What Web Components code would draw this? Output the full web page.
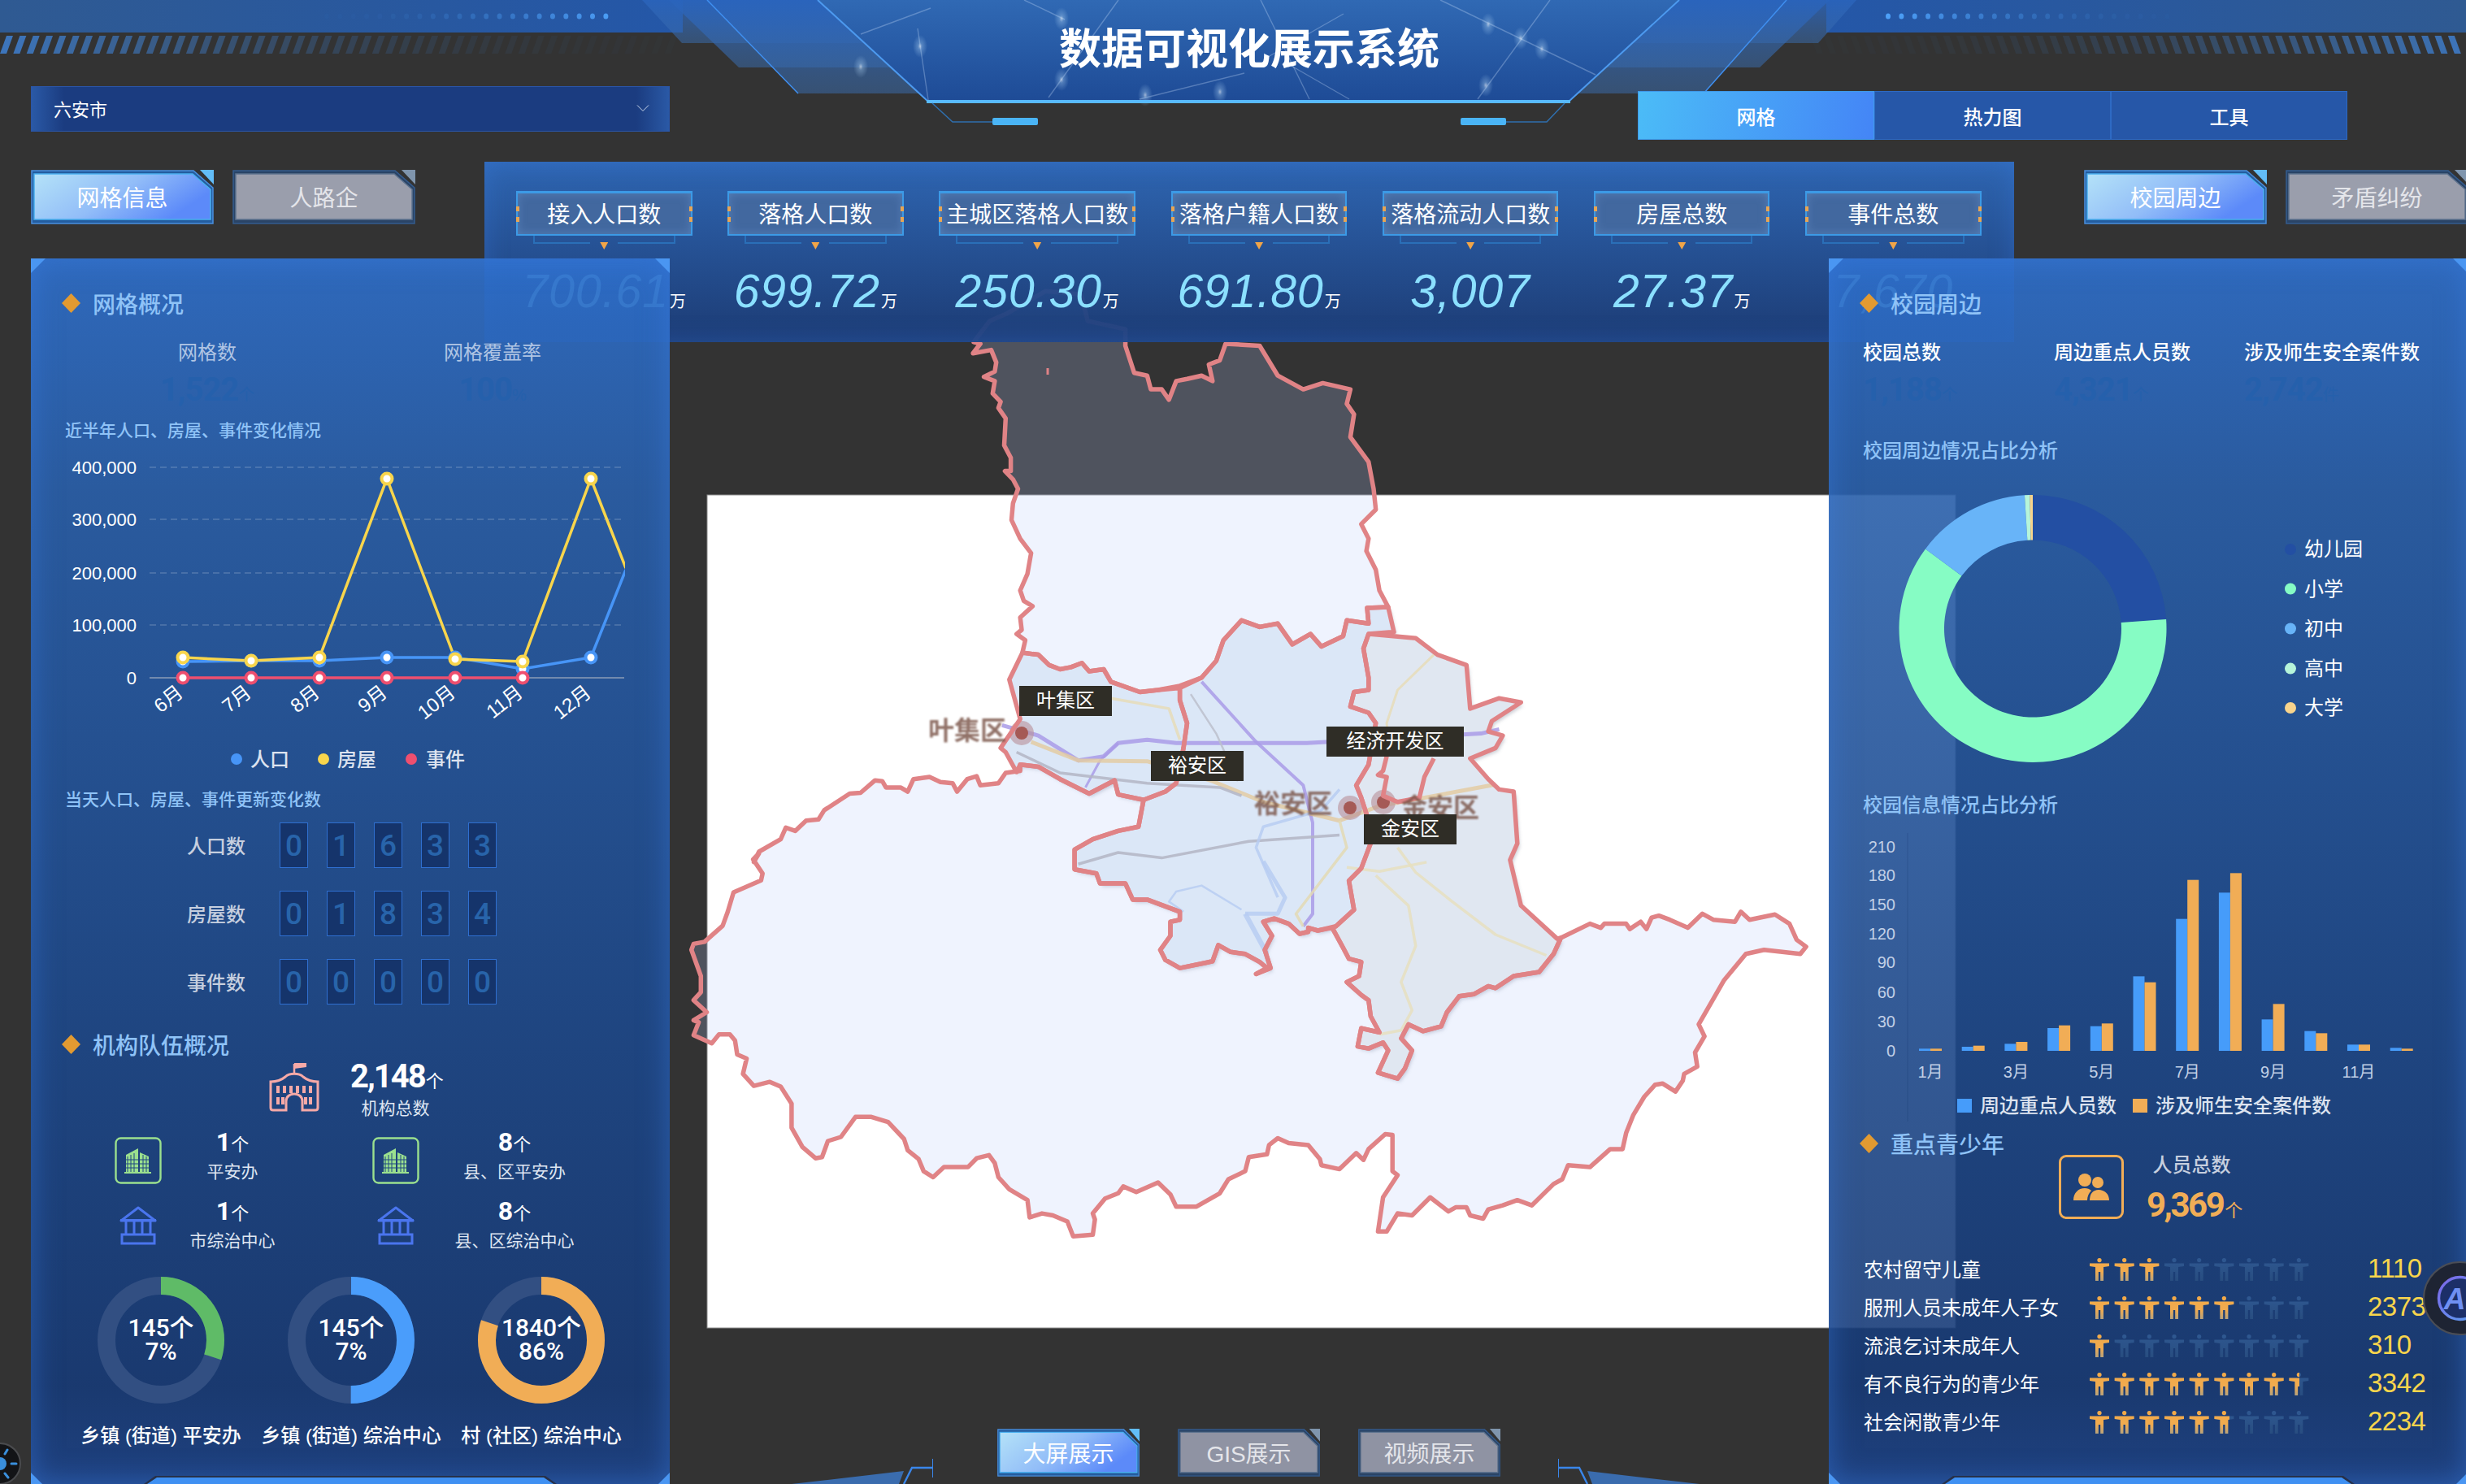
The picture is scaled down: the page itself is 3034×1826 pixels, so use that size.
<!DOCTYPE html>
<html lang="zh">
<head>
<meta charset="utf-8">
<title>数据可视化展示系统</title>
<style>
html, body { margin: 0; background: #333; }
body { font-family: "Liberation Sans", "Noto Sans CJK SC", sans-serif; color: #fff; }
</style>
</head>
<body>
<dash-screen>
    <city-map></city-map>
    <top-banner></top-banner>
    <tab-group class="left">
        <cut-tab active>网格信息</cut-tab>
        <cut-tab>人路企</cut-tab>
    </tab-group>
    <tab-group class="right">
        <cut-tab active>校园周边</cut-tab>
        <cut-tab>矛盾纠纷</cut-tab>
    </tab-group>
    <stat-bar>
        <stat-item label="接入人口数" value="700.61" unit="万"></stat-item>
        <stat-item label="落格人口数" value="699.72" unit="万"></stat-item>
        <stat-item label="主城区落格人口数" value="250.30" unit="万"></stat-item>
        <stat-item label="落格户籍人口数" value="691.80" unit="万"></stat-item>
        <stat-item label="落格流动人口数" value="3,007"></stat-item>
        <stat-item label="房屋总数" value="27.37" unit="万"></stat-item>
        <stat-item label="事件总数" value="7,670"></stat-item>
    </stat-bar>

    <dash-panel class="left">
        <sec-title>网格概况</sec-title>
        <metric-row columns="358px 344px" center pad="38">
            <metric-cell label="网格数" value="1,522" unit="个" dim></metric-cell>
            <metric-cell label="网格覆盖率" value="100" unit="%" dim></metric-cell>
        </metric-row>
        <mini-title style="margin-top:18px">近半年人口、房屋、事件变化情况</mini-title>
        <line-chart></line-chart>
        <mini-title style="margin-top:19px">当天人口、房屋、事件更新变化数</mini-title>
        <digit-row label="人口数" digits="01633" style="margin-top:13px"></digit-row>
        <digit-row label="房屋数" digits="01834" style="margin-top:28px"></digit-row>
        <digit-row label="事件数" digits="00000" style="margin-top:28px"></digit-row>
        <sec-title style="margin-top:29px">机构队伍概况</sec-title>
        <org-summary></org-summary>
        <org-grid>
            <org-item icon="tower" value="1" label="平安办" style="--tw:172px"></org-item>
            <org-item icon="tower" value="8" label="县、区平安办" style="--tw:232px"></org-item>
            <org-item icon="bank" value="1" label="市综治中心" style="--tw:172px"></org-item>
            <org-item icon="bank" value="8" label="县、区综治中心" style="--tw:232px"></org-item>
        </org-grid>
        <ring-row>
            <ring-stat color="#5fbb67" pct="30" top="145个" bottom="7%" label="乡镇 (街道) 平安办"></ring-stat>
            <ring-stat color="#4a9dfb" pct="50" top="145个" bottom="7%" label="乡镇 (街道) 综治中心"></ring-stat>
            <ring-stat color="#f1ad56" pct="80" top="1840个" bottom="86%" label="村 (社区) 综治中心"></ring-stat>
        </ring-row>
    </dash-panel>

    <dash-panel class="right">
        <sec-title>校园周边</sec-title>
        <metric-row columns="235px 234px 234px" pad="42">
            <metric-cell label="校园总数" value="1,188" unit="个"></metric-cell>
            <metric-cell label="周边重点人员数" value="4,321" unit="个"></metric-cell>
            <metric-cell label="涉及师生安全案件数" value="2,742" unit="件"></metric-cell>
        </metric-row>
        <mini-title big style="margin-top:43px">校园周边情况占比分析</mini-title>
        <pie-chart></pie-chart>
        <mini-title big style="margin-top:26px">校园信息情况占比分析</mini-title>
        <bar-chart></bar-chart>
        <sec-title style="margin-top:7px">重点青少年</sec-title>
        <youth-summary></youth-summary>
        <youth-row label="农村留守儿童" reach="92" value="1110" style="margin-top:37px"></youth-row>
        <youth-row label="服刑人员未成年人子女" reach="178" value="2373"></youth-row>
        <youth-row label="流浪乞讨未成年人" reach="30" value="310"></youth-row>
        <youth-row label="有不良行为的青少年" reach="258" value="3342"></youth-row>
        <youth-row label="社会闲散青少年" reach="172" value="2234"></youth-row>
    </dash-panel>

    <bottom-nav>
        <cut-tab small active>大屏展示</cut-tab>
        <cut-tab small>GIS展示</cut-tab>
        <cut-tab small>视频展示</cut-tab>
    </bottom-nav>
    <float-ball></float-ball>
    <sun-ball></sun-ball>
</dash-screen>

<script>
(function () {
    const SANS = '"Liberation Sans", "Noto Sans CJK SC", sans-serif';
    const DIN = 'Roboto, "Noto Sans CJK SC", sans-serif';

    // every element here is just a shadow root filled once from its attributes
    function define(name, css, render) {
        class Item extends HTMLElement {
            constructor() {
                super();
                this.attachShadow({ mode: "open" });
            }
            connectedCallback() {
                this.shadowRoot.innerHTML = `<style>${css}</style>${render(this)}`;
            }
        }
        customElements.define(name, Item);
    }

    /* Page */
    define("dash-screen", `
        :host { display: grid; position: relative; overflow: hidden; width: 3034px; height: 1826px; background: #333;
            grid-template-columns: 38px 558px 228px 1426px 228px 558px;
            grid-template-rows: 199px 119px 103px 1405px; }
        ::slotted(*) { position: relative; z-index: 1; }
        ::slotted(city-map) { position: absolute; z-index: 0; left: 0; top: 0; }
        ::slotted(top-banner) { grid-column: 1 / -1; grid-row: 1; }
        ::slotted(tab-group.left) { grid-column: 2 / 3; grid-row: 2; margin-top: 10px; }
        ::slotted(tab-group.right) { grid-column: 6 / 7; grid-row: 2; margin: 10px 0 0 86px; }
        ::slotted(stat-bar) { grid-column: 3 / 6; grid-row: 2 / 4; z-index: 2; }
        ::slotted(dash-panel.left) { grid-column: 2 / 4; grid-row: 3 / 5; z-index: 3; }
        ::slotted(dash-panel.right) { grid-column: 5 / 7; grid-row: 3 / 5; z-index: 3; }
        ::slotted(bottom-nav) { grid-column: 4 / 5; grid-row: 4; align-self: end; margin-left: 150px; z-index: 2; }
        ::slotted(float-ball), ::slotted(sun-ball) { position: absolute; z-index: 5; }
    `, () => `<slot></slot>`);

    /* Header */
    const starNet = [
        [1059, 82], [1132, 57], [1306, 23], [1306, 98], [1409, 117], [1501, 113],
        [1831, 30], [1871, 47], [1897, 60], [1828, 105]
    ];
    const netLines = [
        [1260, 0, 1310, 24], [1376, 0, 1290, 120], [1145, 10, 1059, 42], [1129, 35, 1142, 123],
        [1551, 0, 1611, 122], [1587, 80, 1660, 122], [1772, 0, 1963, 92], [1907, 0, 1818, 122],
        [1531, 90, 1402, 122], [1653, 17, 1560, 70]
    ];
    function stripes(from, to, lean, fadeTo) {
        let out = "";
        const n = Math.round((to - from) / 16.35);
        for (let i = 0; i < n; i++) {
            const x = from + i * 16.35;
            const t = fadeTo === "right" ? 1 - i / n : i / n;
            const o = (0.85 * t * t + 0.02).toFixed(2);
            out += `<polygon points="${x + lean},44 ${x + lean + 8},44 ${x + 8},66 ${x},66" fill="#3f80d0" opacity="${o}"/>`;
        }
        return out;
    }
    function dots(from, count, fadeTo) {
        let out = "";
        for (let i = 0; i < count; i++) {
            const t = fadeTo === "right" ? 1 - i / count : i / count;
            out += `<ellipse cx="${from + i * 16.35}" cy="20" rx="3" ry="3.6" fill="#4da0f8" opacity="${(t * t + 0.03).toFixed(2)}"/>`;
        }
        return out;
    }
    define("top-banner", `
        :host { display: grid; width: 3034px; height: 199px; }
        svg { grid-area: 1 / 1; display: block; }
        .bar { grid-area: 1 / 1; display: grid; grid-template-columns: 786px 1fr 873px; grid-template-rows: 106px 66px; padding: 0 146px 0 38px; }
        h1 { grid-column: 1 / -1; margin: 0; padding: 31px 0 0 148px; height: 75px; font: 700 52px/60px ${SANS}; text-align: center; color: #fff; letter-spacing: 0; }
        .select { grid-column: 1; display: flex; align-items: center; justify-content: space-between; box-sizing: border-box; height: 56px; padding: 0 24px 2px 27px;
            font-size: 22px; color: #fff; border: 1px solid #2b55a6;
            background: linear-gradient(90deg, #2a59a6, #1b3c80 40px, #1b3c80 calc(100% - 40px), #2a59a6); }
        .tools { grid-column: 3; display: flex; margin-top: 6px; height: 60px; }
        .tools span { flex: 1; display: flex; align-items: center; justify-content: center; box-sizing: border-box; font-size: 24px; font-weight: 500; color: #fff;
            background: #2657a8; border: 1px solid #2e6ac4; }
        .tools span.on { background: linear-gradient(100deg, #4bbcf7, #4485f6); border-color: #3f9aea; }
    `, () => `
        <svg width="3034" height="199" viewBox="0 0 3034 199">
            <defs>
                <linearGradient id="bandL" x1="0" x2="1" y1="0" y2="0"><stop offset="0" stop-color="#2f5a92"/><stop offset="1" stop-color="#2457a8"/></linearGradient>
                <linearGradient id="bandR" x1="1" x2="0" y1="0" y2="0"><stop offset="0" stop-color="#2f5a92"/><stop offset="1" stop-color="#2457a8"/></linearGradient>
                <linearGradient id="wing" x1="0" x2="0" y1="0" y2="1"><stop offset="0" stop-color="#2a64bc" stop-opacity=".85"/><stop offset="1" stop-color="#3a6aa8" stop-opacity=".55"/></linearGradient>
                <linearGradient id="main" x1="0" x2="0" y1="0" y2="1"><stop offset="0" stop-color="#3069b4"/><stop offset="1" stop-color="#1e4b96"/></linearGradient>
                <radialGradient id="glow"><stop offset="0" stop-color="#fff" stop-opacity=".6"/><stop offset=".3" stop-color="#bfe3ff" stop-opacity=".3"/><stop offset="1" stop-color="#bfe3ff" stop-opacity="0"/></radialGradient>
            </defs>
            <rect x="0" y="0" width="840" height="40" fill="url(#bandL)"/>
            <rect x="2247" y="0" width="787" height="40" fill="url(#bandR)"/>
            ${stripes(0, 835, 8, "right")}
            ${stripes(2235, 3034, -8, "left")}
            ${dots(402, 22, "left")}
            ${dots(2323, 22, "right")}
            <polygon points="790,0 839,53 1150,53 1150,0" fill="url(#wing)"/>
            <polygon points="823,0 909,83 1150,83 1150,0" fill="url(#wing)"/>
            <polygon points="870,0 982,115 1150,115 1150,0" fill="url(#wing)"/>
            <polygon points="2284,0 2237,53 1920,53 1920,0" fill="url(#wing)"/>
            <polygon points="2251,0 2165,83 1920,83 1920,0" fill="url(#wing)"/>
            <polygon points="2198,0 2096,115 1920,115 1920,0" fill="url(#wing)"/>
            <polyline points="870,0 982,115" fill="none" stroke="#3f8ff0" stroke-width="1.5"/>
            <polyline points="2198,0 2096,115" fill="none" stroke="#3f8ff0" stroke-width="1.5"/>
            <polygon points="1006,0 1142,125 1930,125 2066,0" fill="url(#main)"/>
            ${netLines.map(l => `<line x1="${l[0]}" y1="${l[1]}" x2="${l[2]}" y2="${l[3]}" stroke="#cfe6ff" stroke-opacity=".3" stroke-width="1.4"/>`).join("")}
            ${starNet.map(p => `<ellipse cx="${p[0]}" cy="${p[1]}" rx="9" ry="14" fill="url(#glow)"/>`).join("")}
            <polyline points="1006,0 1142,125" fill="none" stroke="#4d9aef" stroke-width="2"/>
            <polyline points="2066,0 1930,125" fill="none" stroke="#4d9aef" stroke-width="2"/>
            <rect x="1140" y="123" width="792" height="4" fill="#58baff"/>
            <polyline points="1147,127 1172,150 1221,150" fill="none" stroke="#2f6fae" stroke-width="1.5"/>
            <polyline points="1925,127 1903,150 1853,150" fill="none" stroke="#2f6fae" stroke-width="1.5"/>
            <rect x="1221" y="145" width="56" height="9" rx="2" fill="#4ab4f6"/>
            <rect x="1797" y="145" width="56" height="9" rx="2" fill="#4ab4f6"/>
        </svg>
        <div class="bar">
            <h1>数据可视化展示系统</h1>
            <div class="select">
                <span>六安市</span>
                <svg width="16" height="8" viewBox="0 0 16 8"><polyline points="1,0.5 8,7.5 15,0.5" fill="none" stroke="#c9d6ea" stroke-width="1"/></svg>
            </div>
            <div></div>
            <div class="tools"><span class="on">网格</span><span>热力图</span><span>工具</span></div>
        </div>
    `);

    /* Cut-corner tabs */
    define("tab-group", `:host { display: flex; gap: 23px; align-items: flex-start; }`, () => `<slot></slot>`);
    define("cut-tab", `
        :host { display: inline-grid; flex: none; width: 225px; height: 67px; font-size: 28px; color: #e4e5ea; }
        :host([active]) { color: #fff; }
        :host([small]) { width: 175px; height: 59px; }
        svg { grid-area: 1 / 1; display: block; width: 100%; height: 100%; }
        span { grid-area: 1 / 1; align-self: center; justify-self: center; margin-bottom: 2px; }
    `, el => {
        const on = el.hasAttribute("active");
        const fill = on ? "url(#g)" : (el.hasAttribute("small") ? "#8f93a3" : "#9a9eac");
        return `
        <svg viewBox="0 0 225 67" preserveAspectRatio="none">
            <defs><linearGradient id="g" x1="0" x2="1" y1="0" y2=".4"><stop offset="0" stop-color="#b4e2f8"/><stop offset=".55" stop-color="#92bdf8"/><stop offset="1" stop-color="#5c8af9"/></linearGradient></defs>
            <polygon points="1,1 200,1 224,22 224,66 1,66" fill="${on ? "#245d9f" : "#2a4466"}" stroke="${on ? "#4a90e0" : "#345c8f"}" stroke-width="1.5"/>
            <polygon points="4,5 199,5 221,24 221,61 4,61" fill="${fill}" stroke="${on ? "#4ab0f0" : "#5e738f"}" stroke-width="1.5"/>
            <polygon points="208,0 225,0 225,18" fill="${on ? "#62bdf8" : "#7f95ad"}"/>
        </svg>
        <span><slot></slot></span>`;
    });
    define("bottom-nav", `
        :host { display: flex; align-items: flex-end; }
        svg { display: block; flex: none; }
        .tabs { display: flex; gap: 47px; margin: 0 71px 9px 79px; }
    `, () => `
        <svg width="174" height="31" viewBox="0 0 174 31">
            <polygon points="0,31 138,15 132,31" fill="#3a6cae"/>
            <polyline points="138,31 148,11 174,11" fill="none" stroke="#3a86ea" stroke-width="2.4"/>
            <line x1="174" y1="0" x2="174" y2="23" stroke="#3a86ea" stroke-width="2"/>
        </svg>
        <div class="tabs"><slot></slot></div>
        <svg width="174" height="31" viewBox="0 0 174 31">
            <polygon points="174,31 36,15 42,31" fill="#3a6cae"/>
            <polyline points="36,31 26,11 0,11" fill="none" stroke="#3a86ea" stroke-width="2.4"/>
            <line x1="0" y1="0" x2="0" y2="23" stroke="#3a86ea" stroke-width="2"/>
        </svg>
    `);

    /* Stats */
    define("stat-bar", `
        :host { display: flex; gap: 43.6px; box-sizing: border-box; padding: 36px 0 0 39px;
            background: linear-gradient(180deg, rgba(46,104,184,.95), rgba(27,60,120,.95));
            box-shadow: inset 0 0 30px rgba(60,130,235,.35); }
    `, () => `<slot></slot>`);
    define("stat-item", `
        :host { display: block; flex: none; min-width: 216.5px; }
        .label { position: relative; display: flex; align-items: center; justify-content: center; box-sizing: border-box; height: 55px; padding: 0 7px 2px;
            font-size: 28px; color: #fff; white-space: nowrap; background: #42689f;
            border: 2px solid #3c9ae6; border-top-width: 3px; box-shadow: inset 0 0 12px rgba(120,170,230,.35); }
        .label i { position: absolute; width: 4px; height: 6px; background: #e8a654; }
        .br { display: flex; gap: 34px; height: 10px; margin: 0 21px; }
        .br b { flex: 1; box-sizing: border-box; border-bottom: 2px solid #2a6fb8; }
        .br b:first-child { border-left: 2px solid #2a6fb8; }
        .br b:last-child { border-right: 2px solid #2a6fb8; }
        .tri { width: 10px; height: 9px; margin: -2px auto 0; background: #f1a548; clip-path: polygon(0 0, 100% 0, 50% 100%); }
        .num { display: flex; justify-content: center; align-items: baseline; margin-top: 19px; white-space: nowrap; }
        .num span { font: italic 400 57px/64px ${SANS}; letter-spacing: 1px; color: #8be0ff; }
        .num em { font: normal 20px/24px ${SANS}; color: #fff; margin-left: 1px; }
    `, el => `
        <div class="label">${el.getAttribute("label")}
            <i style="left:-2px;top:16px"></i><i style="left:-2px;top:29px"></i>
            <i style="right:-2px;top:16px"></i><i style="right:-2px;top:29px"></i>
        </div>
        <div class="br"><b></b><b></b></div>
        <div class="tri"></div>
        <div class="num"><span>${el.getAttribute("value")}</span>${el.getAttribute("unit") ? `<em>${el.getAttribute("unit")}</em>` : ""}</div>
    `);

    /* Panels */
    define("dash-panel", `
        :host { display: block; box-sizing: border-box; position: relative; padding-top: 35px; height: 1508px;
            background: linear-gradient(180deg, rgba(46,110,201,.9) 1%, rgba(41,95,170,.9) 19%, rgba(29,72,138,.9) 62%, rgba(23,58,118,.9) 92%, rgba(28,66,135,.9) 100%);
            box-shadow: inset 0 0 36px rgba(60,130,235,.5); }
        .c { position: absolute; width: 18px; height: 18px; background: #4a96f2; }
        .tl { left: 0; top: 0; clip-path: polygon(0 0, 100% 0, 0 100%); }
        .tr { right: 0; top: 0; clip-path: polygon(0 0, 100% 0, 100% 100%); }
        .bl { left: 0; bottom: 0; width: 14px; height: 14px; clip-path: polygon(0 0, 100% 100%, 0 100%); }
        .br { right: 0; bottom: 0; width: 14px; height: 14px; clip-path: polygon(100% 0, 100% 100%, 0 100%); }
        .foot { position: absolute; left: 50%; bottom: 0; width: 508px; margin-left: -254px; height: 10px; background: #27314a; clip-path: polygon(14px 0, calc(100% - 14px) 0, 100% 100%, 0 100%); }
        .foot::after { content: ""; position: absolute; left: 4px; right: 4px; top: 2px; bottom: 0; background: #3f90f2; clip-path: polygon(12px 0, calc(100% - 12px) 0, 100% 100%, 0 100%); }
    `, () => `
        <i class="c tl"></i><i class="c tr"></i><i class="c bl"></i><i class="c br"></i><i class="foot"></i>
        <slot></slot>
    `);
    define("sec-title", `
        :host { display: flex; align-items: center; height: 40px; padding-left: 38px; font-size: 28px; font-weight: 500; color: #8fc3f7; }
        i { width: 23px; height: 24px; margin-right: 15px; background: #e29a31; clip-path: polygon(50% 0, 100% 50%, 50% 100%, 0 50%); filter: drop-shadow(0 0 3px rgba(240,170,70,.6)); }
    `, () => `<i></i><slot></slot>`);
    define("mini-title", `
        :host { display: block; height: 30px; line-height: 30px; padding-left: 42px; font-size: 21px; font-weight: 500; color: #8fc3f7; white-space: nowrap; }
        :host([big]) { font-size: 24px; }
    `, () => `<slot></slot>`);
    define("metric-row", `
        :host { display: grid; margin-top: 24px; }
    `, el => {
        el.style.gridTemplateColumns = el.getAttribute("columns");
        el.style.paddingLeft = el.getAttribute("pad") + "px";
        if (el.hasAttribute("center")) el.style.textAlign = "center";
        return `<slot></slot>`;
    });
    define("metric-cell", `
        :host { display: block; white-space: nowrap; font-size: 24px; font-weight: 500; color: #fff; }
        :host([dim]) { color: #b0c5e4; font-weight: 400; }
        .t { height: 34px; line-height: 34px; }
        .v { margin-top: 12px; height: 34px; line-height: 34px; color: #2560ac; }
        .v b { font: 700 40px/34px ${DIN}; letter-spacing: -1px; }
        .v i { font: normal 20px/24px ${SANS}; }
    `, el => `
        <div class="t">${el.getAttribute("label")}</div>
        <div class="v"><b>${el.getAttribute("value")}</b><i>${el.getAttribute("unit")}</i></div>
    `);

    /* Left panel charts */
    define("line-chart", `
        :host { display: block; margin-top: 5px; height: 400px; }
        svg { display: block; font-family: ${SANS}; }
    `, () => {
        const xs = [225, 309, 393, 476, 560, 643, 727];
        const blue = [814, 813, 813, 809, 809, 823, 809];
        const yellow = [809, 813, 809, 589, 811, 814, 589];
        const red = xs.slice(0, 6);
        const line = (ys, end) => xs.map((x, i) => `${x},${ys[i]}`).join(" ") + ` ${end}`;
        const mark = (x, y, c) => `<circle cx="${x}" cy="${y}" r="6.5" fill="#fff" stroke="${c}" stroke-width="4"/>`;
        const rows = [[575, "400,000"], [639, "300,000"], [705, "200,000"], [769, "100,000"]];
        const months = ["6月", "7月", "8月", "9月", "10月", "11月", "12月"];
        return `
        <svg width="786" height="400" viewBox="38 550 786 400">
            <defs><clipPath id="plot"><rect x="184" y="560" width="585" height="290"/></clipPath></defs>
            ${rows.map(r => `<line x1="184" x2="768" y1="${r[0]}" y2="${r[0]}" stroke="#fff" stroke-opacity=".2" stroke-width="1.5" stroke-dasharray="8 5"/>
                <text x="168" y="${r[0] + 8}" text-anchor="end" font-size="22" fill="#fff">${r[1]}</text>`).join("")}
            <line x1="184" x2="768" y1="834" y2="834" stroke="#b8bcc6" stroke-opacity=".7" stroke-width="1.5"/>
            <text x="168" y="842" text-anchor="end" font-size="22" fill="#fff">0</text>
            ${months.map((m, i) => `<text x="${xs[i] + 2}" y="855" text-anchor="end" font-size="24" fill="#fff" transform="rotate(-38 ${xs[i] + 2} 855)">${m}</text>`).join("")}
            <g clip-path="url(#plot)">
                <polyline points="${line(blue, "770,701")}" fill="none" stroke="#4795f7" stroke-width="3.5"/>
                <polyline points="${line(yellow, "770,699")}" fill="none" stroke="#f8d54c" stroke-width="3.5"/>
                <polyline points="${red.map(x => `${x},834`).join(" ")}" fill="none" stroke="#ee4f6f" stroke-width="3.5"/>
                ${xs.map((x, i) => mark(x, blue[i], "#4795f7")).join("")}
                ${xs.map((x, i) => mark(x, yellow[i], "#f8d54c")).join("")}
                ${red.map(x => mark(x, 834, "#ee4f6f")).join("")}
            </g>
            <circle cx="291" cy="934" r="7" fill="#4795f7"/><text x="308" y="943" font-size="24" font-weight="500" fill="#dde3ef">人口</text>
            <circle cx="398" cy="934" r="7" fill="#f8d54c"/><text x="415" y="943" font-size="24" font-weight="500" fill="#dde3ef">房屋</text>
            <circle cx="506" cy="934" r="7" fill="#ee4f6f"/><text x="524" y="943" font-size="24" font-weight="500" fill="#dde3ef">事件</text>
        </svg>`;
    });
    define("digit-row", `
        :host { display: flex; align-items: center; height: 56px; }
        label { width: 264px; text-align: right; font-size: 24px; font-weight: 500; color: #c6cfdf; margin-bottom: 2px; }
        .d { display: flex; gap: 23px; margin-left: 42px; }
        .d span { box-sizing: border-box; width: 35px; height: 56px; display: flex; align-items: center; justify-content: center;
            background: #15346b; border: 1px solid #2f6fd0; color: #2864aa; font: 500 37px/1 ${DIN}; }
    `, el => `
        <label>${el.getAttribute("label")}</label>
        <div class="d">${[...el.getAttribute("digits")].map(n => `<span>${n}</span>`).join("")}</div>
    `);
    define("org-summary", `
        :host { display: flex; margin-top: 2px; padding-left: 293px; height: 72px; }
        svg { flex: none; display: block; }
        .t { width: 111px; margin-left: 38px; text-align: center; white-space: nowrap; }
        .v { height: 36px; line-height: 36px; }
        .v b { font: 700 40px/36px ${DIN}; letter-spacing: -2px; }
        .v i { font: normal 22px/24px ${SANS}; margin-left: 1px; }
        .l { margin-top: 6px; height: 30px; line-height: 30px; font-size: 21px; color: #dfe6f2; }
    `, () => `
        <svg width="62" height="61" viewBox="0 0 62 61" fill="none" stroke="#f6a9a7" stroke-width="3">
            <path d="M31 14V2" stroke-width="2.5"/>
            <path d="M31 1H46V6L31 8Z" fill="#f6a9a7" stroke="none"/>
            <path d="M2 24C8 24 14 23 20 18C25 13 37 13 42 18C48 23 54 24 60 24V56C60 58 59 59 57 59H41V48C41 42 36 39 31 39C26 39 21 42 21 48V59H5C3 59 2 58 2 56Z"/>
            <g stroke="none" fill="#f6a9a7">
                <rect x="9" y="29" width="4" height="9"/><rect x="17" y="29" width="4" height="9"/><rect x="25" y="29" width="4" height="9"/><rect x="33" y="29" width="4" height="9"/><rect x="41" y="29" width="4" height="9"/><rect x="49" y="29" width="4" height="9"/>
                <rect x="9" y="43" width="4" height="9"/><rect x="15" y="43" width="4" height="9"/><rect x="43" y="43" width="4" height="9"/><rect x="49" y="43" width="4" height="9"/>
            </g>
        </svg>
        <div class="t">
            <div class="v"><b>2,148</b><i>个</i></div>
            <div class="l">机构总数</div>
        </div>
    `);
    define("org-grid", `
        :host { display: grid; grid-template-columns: 317px 1fr; row-gap: 17px; margin-top: 10px; padding-left: 102px; }
    `, () => `<slot></slot>`);
    const orgIcons = {
        tower: `<svg width="58" height="58" viewBox="0 0 58 58">
            <rect x="1.5" y="1.5" width="55" height="55" rx="6" fill="none" stroke="#9be08e" stroke-width="2.4"/>
            <path d="M14 43V22L29 14V43ZM31 43V19L42 24V43ZM12 43H45V45H12Z" fill="#9be08e"/>
            <g stroke="#1f4681" stroke-width="1"><path d="M16 24V43M20 22V43M24 20V43M35 22V43M39 24V43M14 28H42M14 33H42M14 38H42"/></g>
        </svg>`,
        bank: `<svg width="46" height="48" viewBox="0 0 46 48" fill="none" stroke="#4a75ee" stroke-width="3">
            <path d="M2 18L23 2L44 18Z" stroke-linejoin="round"/>
            <rect x="1" y="16" width="44" height="3" fill="#4a75ee" stroke="none"/>
            <path d="M8 19V35M18 19V35M28 19V35M38 19V35" stroke-width="3"/>
            <rect x="3" y="35" width="40" height="11"/>
        </svg>`
    };
    define("org-item", `
        :host { display: flex; height: 68px; }
        .i { flex: none; width: 60px; display: flex; justify-content: center; align-items: flex-start; padding-top: 10px; }
        .t { flex: none; width: var(--tw); text-align: center; white-space: nowrap; }
        .v { height: 32px; line-height: 32px; }
        .v b { font: 700 32px/32px ${DIN}; }
        .v i { font: normal 22px/24px ${SANS}; }
        .l { margin-top: 6px; height: 30px; line-height: 30px; font-size: 21px; color: #dfe6f2; }
    `, el => `
        <div class="i">${orgIcons[el.getAttribute("icon")]}</div>
        <div class="t">
            <div class="v"><b>${el.getAttribute("value")}</b><i>个</i></div>
            <div class="l">${el.getAttribute("label")}</div>
        </div>
    `);
    define("ring-row", `
        :host { display: grid; grid-template-columns: repeat(3, 234px); margin-top: 29px; padding-left: 43px; }
    `, () => `<slot></slot>`);
    define("ring-stat", `
        :host { display: flex; flex-direction: column; align-items: center; }
        .r { display: grid; width: 156px; height: 156px; }
        svg { grid-area: 1 / 1; display: block; }
        .t { grid-area: 1 / 1; align-self: center; text-align: center; font: 500 30px/29px ${DIN}; margin-top: -3px; }
        .l { margin-top: 25px; height: 30px; line-height: 30px; font-size: 24px; font-weight: 500; white-space: nowrap; }
    `, el => {
        const c = 2 * Math.PI * 67;
        const pct = +el.getAttribute("pct") / 100;
        return `
        <div class="r">
            <svg width="156" height="156" viewBox="0 0 156 156">
                <circle cx="78" cy="78" r="67" fill="none" stroke="#324f82" stroke-width="22"/>
                <circle cx="78" cy="78" r="67" fill="none" stroke="${el.getAttribute("color")}" stroke-width="22"
                    stroke-dasharray="${c * pct} ${c}" transform="rotate(-90 78 78)"/>
            </svg>
            <div class="t">${el.getAttribute("top")}<br>${el.getAttribute("bottom")}</div>
        </div>
        <div class="l">${el.getAttribute("label")}</div>`;
    });

    /* Right panel charts */
    function arc(cx, cy, r0, r1, a0, a1) {
        const p = (r, a) => {
            const t = (a - 90) * Math.PI / 180;
            return `${(cx + r * Math.cos(t)).toFixed(2)} ${(cy + r * Math.sin(t)).toFixed(2)}`;
        };
        const big = a1 - a0 > 180 ? 1 : 0;
        return `M${p(r1, a0)}A${r1} ${r1} 0 ${big} 1 ${p(r1, a1)}L${p(r0, a1)}A${r0} ${r0} 0 ${big} 0 ${p(r0, a0)}Z`;
    }
    define("pie-chart", `
        :host { display: block; margin-top: 30px; height: 350px; }
        svg { display: block; font-family: ${SANS}; }
    `, () => {
        const parts = [[0, 86, "#234fa3"], [86, 306.6, "#86fcc4"], [306.6, 356.5, "#68b4f8"], [356.5, 358.7, "#b6f5da"], [358.7, 360, "#f8d48c"]];
        const legend = [["幼儿园", "#234fa3", 676], ["小学", "#86fcc4", 724.5], ["初中", "#68b4f8", 773.5], ["高中", "#b6f5da", 822.6], ["大学", "#f8d48c", 871]];
        return `
        <svg width="786" height="350" viewBox="2250 600 786 350">
            ${parts.map(p => `<path d="${arc(2501, 773.5, 109, 164.5, p[0], p[1])}" fill="${p[2]}"/>`).join("")}
            ${legend.map(l => `<circle cx="2818" cy="${l[2]}" r="7" fill="${l[1]}"/><text x="2835" y="${l[2] + 8}" font-size="24" fill="#fff">${l[0]}</text>`).join("")}
        </svg>`;
    });
    define("bar-chart", `
        :host { display: block; margin-top: 14px; height: 360px; }
        svg { display: block; font-family: ${SANS}; }
    `, () => {
        const tops = [[871, 871], [864, 860], [853, 846], [795, 785], [788, 778], [604, 626], [392, 248], [295, 223], [763, 706], [806, 814], [856, 856], [868, 871]];
        const base = 1293;
        const ticks = [[210, 1042], [180, 1077], [150, 1113], [120, 1149], [90, 1184], [60, 1221], [30, 1257], [0, 1293]];
        const labels = [[0, "1月"], [2, "3月"], [4, "5月"], [6, "7月"], [8, "9月"], [10, "11月"]];
        const bars = tops.map((t, i) => {
            const cx = 2375 + i * 52.7;
            const y0 = 1000 + t[0] / 3, y1 = 1000 + t[1] / 3;
            return `<rect x="${cx - 14}" y="${y0}" width="14" height="${base - y0}" fill="#469cfa"/>
                <rect x="${cx}" y="${y1}" width="14" height="${base - y1}" fill="#f1ad56"/>`;
        }).join("");
        return `
        <svg width="786" height="360" viewBox="2250 1020 786 360">
            <line x1="2347" x2="2347" y1="1025" y2="1380" stroke="#10306a" stroke-opacity=".25"/>
            ${ticks.map(t => `<text x="2332" y="${t[1] + 7}" text-anchor="end" font-size="20" fill="#c2d0e6">${t[0]}</text>`).join("")}
            ${bars}
            ${labels.map(l => `<text x="${2375 + l[0] * 52.7}" y="1326" text-anchor="middle" font-size="20" fill="#c2d0e6">${l[1]}</text>`).join("")}
            <rect x="2408" y="1352" width="18" height="17" fill="#469cfa"/>
            <text x="2436" y="1369" font-size="24" font-weight="500" fill="#dde3ef">周边重点人员数</text>
            <rect x="2624" y="1352" width="18" height="17" fill="#f1ad56"/>
            <text x="2652" y="1369" font-size="24" font-weight="500" fill="#dde3ef">涉及师生安全案件数</text>
        </svg>`;
    });
    define("youth-summary", `
        :host { display: flex; margin-top: -6px; padding-left: 283px; height: 79px; }
        .i { flex: none; box-sizing: border-box; width: 80px; height: 79px; border: 3px solid #f1ad56; border-radius: 9px; display: flex; align-items: center; justify-content: center; }
        .t { flex: none; width: 111px; margin-left: 28px; text-align: center; white-space: nowrap; }
        .l { height: 26px; line-height: 26px; font-size: 24px; font-weight: 500; color: #c6cfdf; }
        .v { margin-top: 18px; height: 36px; line-height: 36px; color: #f1ad56; }
        .v b { font: 700 42px/36px ${DIN}; letter-spacing: -2.5px; }
        .v i { font: normal 22px/24px ${SANS}; margin-left: 2px; }
    `, () => `
        <div class="i">
            <svg width="44" height="34" viewBox="0 0 44 34" fill="#f1ad56">
                <circle cx="14" cy="8" r="8"/><path d="M0 33C0 24 6 18 14 18C17 18 20 19 22 21C19 24 17 28 17 33Z"/>
                <circle cx="30" cy="11" r="7"/><path d="M20 33C20 25 24 20 31 20C38 20 44 25 44 33Z"/>
            </svg>
        </div>
        <div class="t">
            <div class="l">人员总数</div>
            <div class="v"><b>9,369</b><i>个</i></div>
        </div>
    `);
    const PERSON = "M12 0a2.6 2.6 0 1 1 0 5.2a2.6 2.6 0 1 1 0-5.2ZM0 6.6H24V10L17 11V28H13.2V17H10.8V28H7V11L0 10Z";
    define("youth-row", `
        :host { display: grid; grid-template-columns: 278px 343px 1fr; align-items: center; height: 47px; padding-left: 43px; white-space: nowrap; }
        .l { font-size: 24px; color: #fff; }
        svg { display: block; margin-top: 2px; }
        .v { font: 400 33px/40px ${SANS}; letter-spacing: -.5px; color: #f8d54c; margin-left: -1px; }
    `, el => {
        const people = fill => Array.from({ length: 9 }, (_, i) => `<path d="${PERSON}" transform="translate(${i * 30.67} 0)" fill="${fill}"/>`).join("");
        return `
        <div class="l">${el.getAttribute("label")}</div>
        <svg width="276" height="28" viewBox="0 0 276 28">
            <defs>
                <linearGradient id="on" x1="0" x2="0" y1="0" y2="1"><stop offset="0" stop-color="#f3a946"/><stop offset=".6" stop-color="#f0ab50"/><stop offset="1" stop-color="#b7a27c"/></linearGradient>
                <linearGradient id="off" x1="0" x2="0" y1="0" y2="1"><stop offset="0" stop-color="#2f5891"/><stop offset="1" stop-color="#284d80"/></linearGradient>
                <clipPath id="reach"><rect width="${el.getAttribute("reach")}" height="28"/></clipPath>
            </defs>
            ${people("url(#off)")}
            <g clip-path="url(#reach)">${people("url(#on)")}</g>
        </svg>
        <div class="v">${el.getAttribute("value")}</div>`;
    });

    /* Floating widgets */
    define("float-ball", `
        :host { display: block; left: 2981px; top: 1552px; width: 91px; height: 91px; }
        svg { display: block; font-family: ${SANS}; }
    `, () => `
        <svg width="91" height="91" viewBox="0 0 91 91">
            <defs><linearGradient id="ring" x1="0" x2="1" y1="0" y2="1"><stop offset="0" stop-color="#7c66e8"/><stop offset="1" stop-color="#5aa0f0"/></linearGradient></defs>
            <circle cx="45.5" cy="45.5" r="44.5" fill="#1e2433" stroke="#4a4d55" stroke-width="2"/>
            <circle cx="45.5" cy="45.5" r="26" fill="#1c2f68" stroke="url(#ring)" stroke-width="3.5"/>
            <text x="39" y="59" text-anchor="middle" font-size="37" font-weight="700" font-style="italic" fill="#6f90f2">A</text>
        </svg>
    `);
    define("sun-ball", `
        :host { display: block; left: -26px; top: 1775px; width: 52px; height: 52px; }
        svg { display: block; }
    `, () => `
        <svg width="52" height="52" viewBox="0 0 52 52">
            <circle cx="26" cy="26" r="25" fill="#131417" stroke="#4a4b4e" stroke-width="2"/>
            <circle cx="26" cy="26" r="8" fill="#3a8fdc"/>
            <g stroke="#3a8fdc" stroke-width="3" stroke-linecap="round"><path d="M32 14L35 9M40 26H46M32 38L36 43M20 14L17 9"/></g>
        </svg>
    `);

    /* Map */
    const z9 = s => s.trim().split(/\s+/).map(p => { const [x, y] = p.split(",").map(Number); return [840 + x / 1.12, 400 + y / 1.96]; });
    const z10 = s => s.trim().split(/\s+/).map(p => { const [x, y] = p.split(",").map(Number); return [840 + x / 1.12, 1050 + y / 2.02]; });
    const pts = list => list.map(p => p[0].toFixed(1) + "," + p[1].toFixed(1)).join(" ");

    const north = z9("400,68 410,45 401,41 423,-10 448,-29 500,-82 549,-74 558,-10 610,10 610,50 622,115 640,122 645,155 660,155 670,180 680,135 695,130 715,122 730,135 725,95 740,85 748,45 795,50 820,122 855,155 882,140 920,155 915,190 925,215 920,270 945,330 952,395 955,445 935,480 945,515 942,545 955,590 960,640 972,680 943,682 945,720 915,712 910,750 880,775 865,745 840,770 820,720 795,728 770,712 745,760 735,810 715,850 685,870 655,880 630,885 590,860 580,830 560,835 550,815 535,825 520,830 505,820 490,795 468,790 472,760 460,745 467,735 465,705 482,678 470,665 465,640 475,600 480,550 465,515 453,470 455,430 462,395 455,372 444,352 452,352 452,320 443,290 445,225 435,200 438,185 427,165 430,135 415,125 430,112 432,90 425,60");
    const south = [
        ...z9("98,1295 105,1270 135,1240 142,1212 155,1220 170,1195 187,1192 195,1170 230,1130 245,1128 265,1098 275,1100 280,1115 300,1115 310,1125 318,1095 340,1090 355,1102 372,1105 378,1125 392,1095 405,1088 410,1110 435,1105 445,1080 465,1075 465,1060 490,1065 520,1095 560,1130 595,1098 600,1132 635,1145 628,1210 600,1220 565,1240 540,1265"),
        ...z10("540,40 570,50 575,75 610,75 620,115 640,115 685,145 685,165 672,170 672,205 658,240 665,265 685,285 720,272 730,268 738,228 755,245 775,250 795,270 805,285 790,300 810,285 802,240 812,205 800,170 815,162 835,175 850,200 862,195 862,185 875,192 895,185 910,235 918,262 935,270 932,305 915,320 935,352 945,365 948,405 960,445 935,435 930,480 945,485 965,470 972,490 958,545 985,560 995,535 1005,490 990,460 1000,425 1020,442 1045,430 1053,395 1070,355 1090,350 1110,330 1120,335 1145,305 1180,295 1200,250 1210,210 1250,175 1265,185 1270,175 1300,175 1305,188 1320,170 1328,188 1335,160 1345,155 1360,165 1385,185 1405,150 1420,165 1450,170 1458,145 1470,165 1505,152 1525,175 1535,215 1548,232 1540,250 1490,240 1465,250 1435,315 1400,425 1408,455 1395,495 1398,530 1380,548 1378,565 1368,592 1350,572 1340,575 1325,605 1310,650 1300,695 1295,735 1278,735 1250,780 1220,775 1212,810 1200,822 1170,875 1150,862 1130,875 1110,885 1103,908 1085,900 1080,880 1065,880 1055,890 1030,855 1005,900 985,895 970,940 958,940 965,855 985,800 978,790 978,700 968,698 945,735 938,762 928,745 905,785 880,775 878,760 862,725 835,720 820,708 808,725 805,748 780,755 775,790 752,810 740,845 708,878 680,878 672,848 655,818 625,842 607,828 600,845 582,858 565,895 568,910 565,948 538,952 530,915 510,900 495,895 478,905 475,862 450,835 435,805 430,770 422,750 405,758 393,780 360,780 345,805 332,790 325,760 310,738 305,710 283,668 260,655 238,655 218,705 200,715 192,755 183,758 165,730 150,682 150,622 135,580 120,568 98,578 83,548 88,510 75,500 72,465 65,450 50,450 40,472 15,452 22,420 15,415 33,395 15,365 25,345 25,305 12,240 15,225 30,220 55,180 62,145 70,97 108,67 110,50 97,15 105,0")
    ];
    const yeji = z9("468,790 490,795 505,820 520,830 535,825 550,815 560,835 580,830 590,860 630,885 655,880 685,875 685,905 695,960 690,1020 680,1105 665,1125 635,1145 600,1132 595,1098 560,1130 520,1095 490,1065 465,1060 460,1078 445,1030 438,1020 465,950 450,855");
    const yuan = [
        ...z9("715,850 735,810 745,760 770,712 795,728 820,720 840,770 865,745 880,775 910,750 915,712 945,720 943,682 972,680 980,740 945,745 938,780 945,850 945,880 925,885 920,920 945,935 955,960 945,1060 928,1110 935,1140 945,1195 950,1240 935,1310 918,1340 925,1410 900,1450"),
        ...z10("875,192 862,185 862,195 850,200 835,175 815,162 800,170 812,205 802,240 810,285 790,300 805,285 795,270 775,250 755,245 738,228 730,268 720,272 685,285 665,265 658,240 672,205 672,170 685,165 685,145 640,115 620,115 610,75 575,75 570,50 540,40"),
        ...z9("540,1265 565,1240 600,1220 628,1210 635,1145 665,1125 680,1105 690,1020 695,960 685,905 685,875")
    ];
    const jinan = [
        ...z9("945,745 1010,755 1040,795 1080,820 1085,925 1125,900 1155,910 1115,955 1110,980 1130,990 1120,1020 1085,1045 1110,1095 1125,1120 1145,1125 1150,1250 1140,1290 1155,1400 1205,1480"),
        ...z10("1210,210 1200,250 1180,295 1145,305 1120,335 1110,330 1090,350 1070,355 1053,395 1045,430 1020,442 1000,425 990,460 1005,490 995,535 985,560 958,545 972,490 965,470 945,485 930,480 935,435 960,445 948,405 945,365 935,352 915,320 932,305 935,270 918,262 910,235 895,185"),
        ...z9("900,1450 925,1410 918,1340 935,1310 950,1240 945,1195 935,1140 928,1110 945,1060 955,960 945,935 920,920 925,885 945,880 945,850 938,780")
    ];
    const devZone = z9("970,1040 965,1075 958,1085 970,1090 965,1135 985,1150 1015,1140 1022,1090 1035,1045");
    const roads = [
        ["#a99be8", 5, z9("440,965 490,990 545,1050 580,1040 600,1008 640,1000 680,1008 860,1008 1100,985 1125,975")],
        ["#a99be8", 4, z9("715,860 790,1005 855,1110 868,1200 868,1420 855,1450")],
        ["#a99be8", 3, z9("555,1115 575,1050 600,1008")],
        ["#e3cba3", 5, z9("480,1005 545,1050 640,1052 730,1100 800,1150 905,1195 960,1160 1120,1108")],
        ["#e6dcb8", 3.5, z9("590,900 670,925 685,1000")],
        ["#e6dcb8", 3, z9("1035,795 985,880 970,960 975,1040")],
        ["#e3d9b4", 3.5, z9("905,1195 915,1260 880,1340 845,1420 855,1450")],
        ["#e6dfc0", 3.5, z9("985,1260 1010,1320 1060,1390 1120,1470 1190,1520")],
        ["#e6dfc0", 3.5, z10("955,55 1000,130 1010,230 990,320 1005,390 990,440 960,450")],
        ["#e6dfc0", 3.5, z10("915,35 960,45 1025,22")],
        ["#b3b5c4", 3.5, z9("460,1030 520,1080 640,1105 740,1115 770,1135")],
        ["#b3b5c4", 3.5, z9("545,1300 600,1272 660,1285 780,1245 905,1230")],
        ["#bcc0cc", 2.5, z9("700,890 735,985 765,1100")],
        ["#b7cdf2", 5, z10("775,150 820,150 830,110 800,20")],
        ["#b7cdf2", 6, z10("775,150 790,200 805,250")],
        ["#b7cdf2", 2.5, z10("770,140 715,80 680,95 670,120 690,145")],
        ["#b7cdf2", 3.5, z9("905,1120 880,1170 800,1210 790,1260 820,1380")]
    ];
    const tags = [
        ["叶集区", 1254, 844, 114], ["经济开发区", 1632, 894, 169],
        ["裕安区", 1416, 924, 114], ["金安区", 1678, 1002, 114]
    ];
    const names = [["叶集区", 1142, 878], ["裕安区", 1543, 968], ["金安区", 1724, 973]];
    define("city-map", `
        :host { display: block; width: 3034px; height: 1826px; }
        svg { display: block; }
        .tag { position: absolute; box-sizing: border-box; height: 37px; line-height: 35px; text-align: center; font-size: 24px; color: #fff; background: #2f2d26; }
        .name { position: absolute; font-size: 32px; font-weight: 700; line-height: 42px; color: #7a5448; opacity: .82; filter: blur(.8px); white-space: nowrap; }
    `, () => {
        const stroke = `fill="none" stroke="#e08386" stroke-width="5.5" stroke-linejoin="round"`;
        const city = (x, y) => `<circle cx="${x}" cy="${y}" r="15" fill="#b88f97" opacity=".6"/><circle cx="${x}" cy="${y}" r="8" fill="#a55a56"/>`;
        return `
        <svg width="3034" height="1826" viewBox="0 0 3034 1826">
            <defs><filter id="edge" x="-5%" y="-5%" width="110%" height="110%"><feDropShadow dx="3" dy="4" stdDeviation="2" flood-color="#8a90a0" flood-opacity=".45"/></filter></defs>
            <rect x="870" y="609" width="1536" height="1025" fill="#fff" stroke="#8a8a8a"/>
            <g filter="url(#edge)">
                <polygon points="${pts(yeji)}" fill="#dbe7f7"/>
                <polygon points="${pts(yuan)}" fill="#dbe7f7"/>
                <polygon points="${pts(jinan)}" fill="#e0e7f1"/>
            </g>
            ${roads.map(r => `<polyline points="${pts(r[2])}" fill="none" stroke="${r[0]}" stroke-width="${r[1]}" stroke-linejoin="round" stroke-opacity=".85"/>`).join("")}
            ${city(1257, 902)}${city(1661, 994)}${city(1702, 987)}
            <polygon points="${pts(south)}" fill="rgb(182,200,250)" fill-opacity=".22"/>
            <polygon points="${pts(north)}" fill="rgb(182,200,250)" fill-opacity=".22"/>
            <polygon points="${pts(south)}" ${stroke}/>
            <polygon points="${pts(north)}" ${stroke}/>
            <polygon points="${pts(yeji)}" ${stroke}/>
            <polygon points="${pts(yuan)}" ${stroke}/>
            <polygon points="${pts(jinan)}" ${stroke}/>
            <polyline points="${pts(devZone)}" ${stroke}/>
            <line x1="1289" y1="453" x2="1289" y2="461" stroke="#e08386" stroke-width="3"/>
        </svg>
        ${names.map(n => `<div class="name" style="left:${n[1]}px;top:${n[2]}px">${n[0]}</div>`).join("")}
        ${tags.map(t => `<div class="tag" style="left:${t[1]}px;top:${t[2]}px;width:${t[3]}px">${t[0]}</div>`).join("")}
        `;
    });
})();
</script>
</body>
</html>
